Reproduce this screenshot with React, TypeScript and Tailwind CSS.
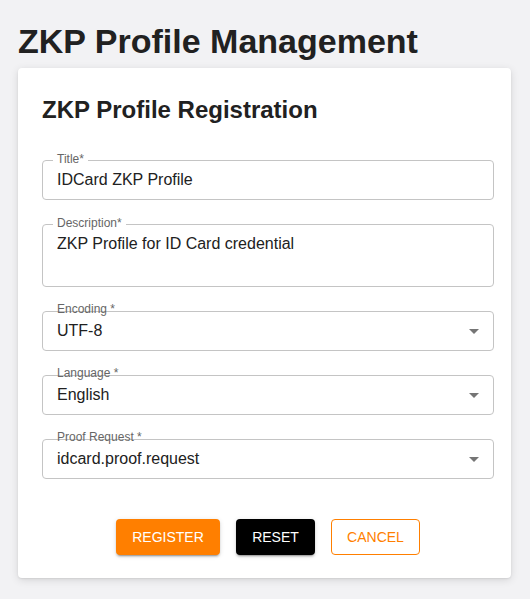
import React from "react";

const font = { fontFamily: '"Liberation Sans", Arial, Helvetica, sans-serif' };

function Arrow() {
  return (
    <svg
      className="absolute right-[7px] top-1/2 -translate-y-1/2"
      width="24"
      height="24"
      viewBox="0 0 24 24"
      fill="#757575"
    >
      <path d="M7 10l5 5 5-5z" />
    </svg>
  );
}

function TextField({ label, value, tall }: { label: string; value: string; tall?: boolean }) {
  return (
    <div
      className={`relative rounded-[4px] border border-[#c4c4c4] bg-white pl-[14px] pt-[7px] ${
        tall ? "h-[63px]" : "h-[40px]"
      }`}
    >
      <span className="absolute left-[10px] top-[-8px] bg-white px-[4px] text-[12px] leading-[12px] text-[#666]">
        {label}
      </span>
      <div className="text-[16px] leading-[23px] text-[#212121]">{value}</div>
    </div>
  );
}

function SelectField({ label, value }: { label: string; value: string }) {
  return (
    <div className="relative h-[40px] rounded-[4px] border border-[#c4c4c4] bg-white pl-[14px] pt-[7px]">
      <span className="absolute left-[14px] top-[-9px] text-[12px] leading-[12px] text-[#666]">
        {label}
      </span>
      <div className="text-[16px] leading-[23px] text-[#212121]">{value}</div>
      <Arrow />
    </div>
  );
}

export default function App() {
  return (
    <div style={font} className="min-h-screen bg-[#f2f2f4] pl-[18px] pr-[19px] pt-[21px] pb-[20px]">
      <h1 className="text-[34px] font-bold leading-[40px] text-[#212121]">ZKP Profile Management</h1>
      <div className="mt-[7px] rounded-[4px] bg-white pl-6 pr-[17px] pt-[26px] pb-[23px] shadow-[0_2px_8px_rgba(0,0,0,0.12),0_1px_2px_rgba(0,0,0,0.08)]">
        <h2 className="text-[24px] font-bold leading-[32px] text-[#212121]">ZKP Profile Registration</h2>
        <div className="mt-[34px] flex flex-col gap-6">
          <TextField label="Title*" value="IDCard ZKP Profile" />
          <TextField label="Description*" value="ZKP Profile for ID Card credential" tall />
          <SelectField label="Encoding *" value="UTF-8" />
          <SelectField label="Language *" value="English" />
          <SelectField label="Proof Request *" value="idcard.proof.request" />
        </div>
        <div className="mt-10 flex justify-center gap-4">
          <button className="h-[36px] w-[104px] rounded-[4px] bg-[#ff7f00] text-[14px] uppercase text-white shadow-[0_3px_1px_-2px_rgba(0,0,0,0.2),0_2px_2px_0_rgba(0,0,0,0.14),0_1px_5px_0_rgba(0,0,0,0.12)]">
            Register
          </button>
          <button className="h-[36px] w-[79px] rounded-[4px] bg-black text-[14px] uppercase text-white shadow-[0_3px_1px_-2px_rgba(0,0,0,0.2),0_2px_2px_0_rgba(0,0,0,0.14),0_1px_5px_0_rgba(0,0,0,0.12)]">
            Reset
          </button>
          <button className="h-[36px] w-[89px] rounded-[4px] border border-[#ff7f00] bg-white text-[14px] uppercase text-[#ff7f00]">
            Cancel
          </button>
        </div>
      </div>
    </div>
  );
}
